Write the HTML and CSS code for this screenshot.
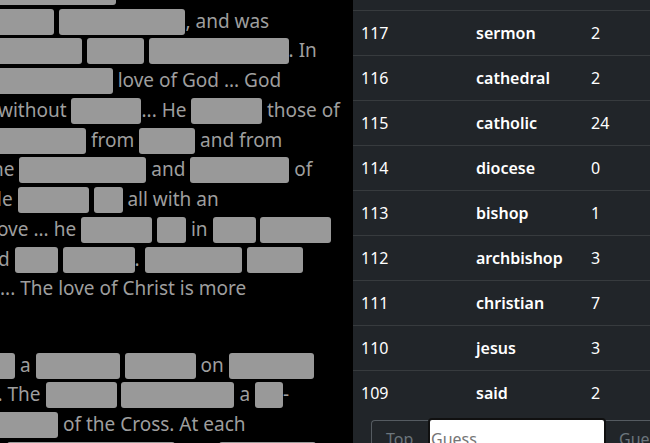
FILE: index.html
```html
<!DOCTYPE html>
<html lang="en">
<head>
<meta charset="utf-8">
<title>Redacted reader</title>
<link rel="stylesheet" href="styles.css">
</head>
<body>
<div class="page">
  <section class="reader">
    <div class="text">
      <div class="para">
        <div class="line s20"><span class="r" style="width:136px"></span></div>
        <div class="line s20"><span class="r" style="width:74px"></span> <span class="r" style="width:126.5px"></span>, and was</div>
        <div class="line s20"><span class="r" style="width:102px"></span> <span class="r" style="width:56.7px"></span> <span class="r" style="width:140px"></span>. In</div>
        <div class="line s20"><span class="r" style="width:132.7px"></span> love of God ... God</div>
        <div class="line s2">without <span class="r" style="width:70px"></span>... He <span class="r" style="width:70.5px"></span> those of</div>
        <div class="line s20"><span class="r" style="width:106px"></span> from <span class="r" style="width:56px"></span> and from</div>
        <div class="line s8">he <span class="r" style="width:127px"></span> and <span class="r" style="width:99px"></span> of</div>
        <div class="line s3">le <span class="r" style="width:71px"></span> <span class="r" style="width:29px"></span> all with an</div>
        <div class="line s3">ove ... he <span class="r" style="width:71px"></span> <span class="r" style="width:29px"></span> in <span class="r" style="width:43px"></span> <span class="r" style="width:71px"></span></div>
        <div class="line s2">d <span class="r" style="width:43px"></span> <span class="r" style="width:72px"></span>. <span class="r" style="width:97px"></span> <span class="r" style="width:56px"></span></div>
        <div class="line">... The love of Christ is more</div>
      </div>
      <div class="para next">
        <div class="line s20"><span class="r" style="width:35px"></span> a <span class="r" style="width:84px"></span> <span class="r" style="width:71px"></span> on <span class="r" style="width:85px"></span></div>
        <div class="line s2h">. The <span class="r" style="width:71px"></span> <span class="r" style="width:113px"></span> a <span class="r" style="width:28px"></span>-</div>
        <div class="line s20"><span class="r" style="width:78px"></span> of the Cross. At each</div>
        <div class="line s3">. <span class="r" style="width:168px"></span> and <span class="r" style="width:97px"></span></div>
      </div>
    </div>
  </section>
  <aside class="guesses">
    <div class="list">
      <div class="row"><span class="num">118</span><span class="word">church</span><span class="num">5</span></div>
      <div class="row"><span class="num">117</span><span class="word">sermon</span><span class="num">2</span></div>
      <div class="row"><span class="num">116</span><span class="word">cathedral</span><span class="num">2</span></div>
      <div class="row"><span class="num">115</span><span class="word">catholic</span><span class="num">24</span></div>
      <div class="row"><span class="num">114</span><span class="word">diocese</span><span class="num">0</span></div>
      <div class="row"><span class="num">113</span><span class="word">bishop</span><span class="num">1</span></div>
      <div class="row"><span class="num">112</span><span class="word">archbishop</span><span class="num">3</span></div>
      <div class="row"><span class="num">111</span><span class="word">christian</span><span class="num">7</span></div>
      <div class="row"><span class="num">110</span><span class="word">jesus</span><span class="num">3</span></div>
      <div class="row last"><span class="num">109</span><span class="word">said</span><span class="num">2</span></div>
    </div>
    <div class="guess-group">
      <span class="addon">Top</span>
      <input class="guess-input" type="text" placeholder="Guess">
      <button class="guess-btn" type="button">Guess</button>
    </div>
  </aside>
</div>
</body>
</html>
```
FILE: styles.css
```css
html, body {
  margin: 0;
  padding: 0;
  background: #000;
}

.page {
  display: flex;
  width: 650px;
  height: 443px;
  overflow: hidden;
  font-family: "Noto Sans", "DejaVu Sans", sans-serif;
}

.reader {
  width: 353px;
  flex: none;
  background: #000;
  overflow: hidden;
}

.text {
  margin-top: -23.25px;
  color: #9e9e9e;
  font-size: 19px;
}

.para.next {
  margin-top: 46.5px;
}

.line {
  height: 29.75px;
  line-height: 29.75px;
  white-space: nowrap;
}

.s20 { margin-left: -20px; }
.s8 { margin-left: -8px; }
.s3 { margin-left: -3px; }
.s2h { margin-left: -2.5px; }
.s2 { margin-left: -2px; }

.r {
  display: inline-block;
  height: 26px;
  margin-top: 2px;
  vertical-align: top;
  background: #999;
  border-radius: 3px;
}

.guesses {
  flex: 1;
  background: #212529;
  overflow: hidden;
  color: #fff;
  font-size: 16px;
}

.list {
  margin-top: -34px;
  width: 345px;
}

.row {
  display: grid;
  grid-template-columns: 115px 115px 115px;
  align-items: center;
  height: 45px;
  box-sizing: border-box;
  border-bottom: 1px solid #373b3e;
}

.row.last {
  height: 44px;
  border-bottom: 0;
}

.row > span {
  padding-left: 8px;
}

.num {
  font-weight: 400;
}

.word {
  font-weight: 600;
}

.guess-group {
  display: flex;
  margin: 5px 0 0 18px;
  height: 38px;
  width: 340px;
}

.addon {
  display: flex;
  align-items: center;
  width: 59px;
  box-sizing: border-box;
  padding-left: 14px;
  border: 1px solid #555b61;
  border-right: 0;
  border-radius: 4px 0 0 4px;
  color: #6c757d;
  font-size: 16px;
}

.guess-input {
  position: relative;
  z-index: 1;
  width: 174px;
  height: 38px;
  box-sizing: border-box;
  margin: 0;
  padding: 0 0 0 1px;
  border: 0;
  border-radius: 2px;
  background: #fff;
  box-shadow: 0 0 0 2px #101010;
  font-family: "Noto Sans", "DejaVu Sans", sans-serif;
  font-size: 16px;
  color: #212529;
}

.guess-input::placeholder {
  color: #757575;
}

.guess-btn {
  flex: none;
  height: 38px;
  margin: 0;
  padding: 0 14px;
  background: #212529;
  border: 1px solid #555b61;
  border-radius: 0 4px 4px 0;
  color: #6c757d;
  font-family: "Noto Sans", "DejaVu Sans", sans-serif;
  font-size: 16px;
}
```
